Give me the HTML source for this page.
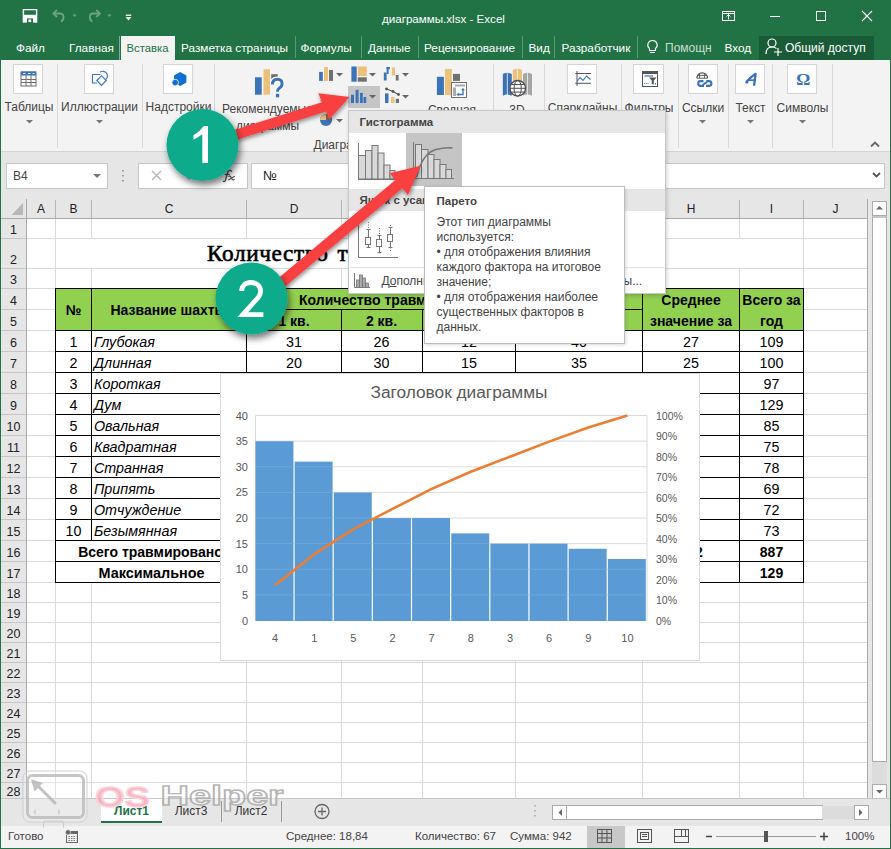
<!DOCTYPE html><html><head><meta charset="utf-8"><style>
html,body{margin:0;padding:0;}
body{width:891px;height:849px;position:relative;overflow:hidden;background:#fff;font-family:"Liberation Sans",sans-serif;}
div{box-sizing:border-box;}
svg{position:absolute;overflow:visible;}
</style></head><body>
<div style="position:absolute;left:0px;top:0px;width:891px;height:60px;background:#217346;"></div>
<svg style="left:0;top:0" width="891" height="60"><path d="M23.4 22.6V9.6H36.6V22.6" fill="none" stroke="#fff" stroke-width="1.4"/><rect x="23" y="14.8" width="14" height="3.6" fill="#fff"/><rect x="23" y="18" width="4" height="4.6" fill="#fff"/><rect x="33" y="18" width="4" height="4.6" fill="#fff"/><rect x="28.4" y="19.5" width="2.8" height="2.6" fill="#fff"/><path d="M53.5 13.5h6.5q3.5 0 3.5 3.8q0 3.2-2.5 4.2" fill="none" stroke="#6aa382" stroke-width="1.9"/><path d="M57 10l-3.6 3.5 3.6 3.5" fill="none" stroke="#6aa382" stroke-width="1.9"/><path d="M72.4 14.6h4.4l-2.2 2.3z" fill="#6aa382"/><path d="M99.8 13.5h-6.5q-3.5 0-3.5 3.8q0 3.2 2.5 4.2" fill="none" stroke="#6aa382" stroke-width="1.9"/><path d="M96.3 10l3.6 3.5-3.6 3.5" fill="none" stroke="#6aa382" stroke-width="1.9"/><path d="M107.1 14.6h4.4l-2.2 2.3z" fill="#6aa382"/><rect x="125.8" y="14.6" width="5.4" height="1.3" fill="#fff"/><path d="M125.6 17h5.8l-2.9 3.5z" fill="#fff"/><rect x="722.5" y="11.5" width="12" height="9" fill="none" stroke="#fff" stroke-width="1"/><path d="M722.5 13.5h12" stroke="#fff"/><path d="M728.5 19.5v-5M726.5 16.5l2-2 2 2" fill="none" stroke="#fff"/><path d="M770 16.5h10" stroke="#fff"/><rect x="816.5" y="11.5" width="9" height="9" fill="none" stroke="#fff"/><path d="M862 11l10 10M872 11l-10 10" stroke="#fff" stroke-width="1.1"/><path d="M295.5 36v22M361.5 36v22M418.5 36v22M522.5 36v22M554.5 36v22M637.5 36v22" stroke="#5d9a74" stroke-width="1"/><path d="M652.5 40.5a4.5 4.5 0 0 1 3 8v2h-6v-2a4.5 4.5 0 0 1 3-8z" fill="none" stroke="#fff" stroke-width="1.1"/><path d="M650 52.5h5" stroke="#fff"/></svg>
<div style="position:absolute;left:382px;top:12px;white-space:nowrap;color:#fff;font-size:11.6px;line-height:14px;">диаграммы.xlsx - Excel</div>
<div style="position:absolute;left:121px;top:36px;width:53.5px;height:24px;background:#f3f3f3;"></div>
<div style="position:absolute;left:119px;top:36px;width:1px;height:24px;background:#7fae90;"></div>
<div style="position:absolute;left:126.5px;top:41px;white-space:nowrap;color:#217346;font-size:11.3px;line-height:14px;">Вставка</div>
<div style="position:absolute;left:16px;top:41px;white-space:nowrap;color:#fff;font-size:11.8px;line-height:14px;">Файл</div>
<div style="position:absolute;left:69px;top:41px;white-space:nowrap;color:#fff;font-size:11.8px;line-height:14px;">Главная</div>
<div style="position:absolute;left:181px;top:41px;white-space:nowrap;color:#fff;font-size:11.8px;line-height:14px;">Разметка страницы</div>
<div style="position:absolute;left:300.5px;top:41px;white-space:nowrap;color:#fff;font-size:11.8px;line-height:14px;">Формулы</div>
<div style="position:absolute;left:368px;top:41px;white-space:nowrap;color:#fff;font-size:11.8px;line-height:14px;">Данные</div>
<div style="position:absolute;left:424px;top:41px;white-space:nowrap;color:#fff;font-size:11.8px;line-height:14px;">Рецензирование</div>
<div style="position:absolute;left:528.5px;top:41px;white-space:nowrap;color:#fff;font-size:11.8px;line-height:14px;">Вид</div>
<div style="position:absolute;left:561.5px;top:41px;white-space:nowrap;color:#fff;font-size:11.8px;line-height:14px;">Разработчик</div>
<div style="position:absolute;left:724.5px;top:41px;white-space:nowrap;color:#fff;font-size:11.8px;line-height:14px;">Вход</div>
<div style="position:absolute;left:665px;top:41px;white-space:nowrap;color:#c9dcd0;font-size:12px;line-height:14px;">Помощн</div>
<div style="position:absolute;left:759px;top:36px;width:115px;height:24px;background:#1a5b37;"></div>
<svg style="left:0;top:0" width="891" height="60"><circle cx="772" cy="43" r="4" fill="none" stroke="#fff" stroke-width="1.2"/><path d="M766 54q0-7 6-7q3 0 4.5 1.5" fill="none" stroke="#fff" stroke-width="1.2"/><path d="M778 48v8M774 52h8" stroke="#fff" stroke-width="1.2"/></svg>
<div style="position:absolute;left:785px;top:41px;white-space:nowrap;color:#fff;font-size:12px;line-height:14px;">Общий доступ</div>
<div style="position:absolute;left:1px;top:60px;width:889px;height:92px;background:#f3f3f3;border-bottom:1px solid #d5d5d5;"></div>
<svg style="left:0;top:0" width="891" height="160"><path d="M57.5 64v84" stroke="#d8d8d8"/><path d="M142.5 64v84" stroke="#d8d8d8"/><path d="M214.5 64v84" stroke="#d8d8d8"/><path d="M493.5 64v84" stroke="#d8d8d8"/><path d="M544.5 64v84" stroke="#d8d8d8"/><path d="M621.5 64v84" stroke="#d8d8d8"/><path d="M678.5 64v84" stroke="#d8d8d8"/><path d="M728.5 64v84" stroke="#d8d8d8"/><path d="M772.5 64v84" stroke="#d8d8d8"/><path d="M832.5 64v84" stroke="#d8d8d8"/></svg>
<div style="position:absolute;left:13px;top:64px;width:30px;height:30px;background:#fdfdfd;border:1px solid #d4d4d4;"></div>
<div style="position:absolute;left:84px;top:64px;width:30px;height:30px;background:#fdfdfd;border:1px solid #d4d4d4;"></div>
<div style="position:absolute;left:163px;top:64px;width:30px;height:30px;background:#fdfdfd;border:1px solid #d4d4d4;"></div>
<div style="position:absolute;left:-271px;top:99.0px;width:600px;height:16px;line-height:16px;text-align:center;white-space:nowrap;color:#444;font-size:12px;">Таблицы</div>
<svg style="left:25.5px;top:120px" width="8" height="4"><path d="M0 0h7l-3.5 3.5z" fill="#777"/></svg>
<div style="position:absolute;left:-200.5px;top:99.0px;width:600px;height:16px;line-height:16px;text-align:center;white-space:nowrap;color:#444;font-size:12px;">Иллюстрации</div>
<svg style="left:95.5px;top:120px" width="8" height="4"><path d="M0 0h7l-3.5 3.5z" fill="#777"/></svg>
<div style="position:absolute;left:-121.5px;top:99.0px;width:600px;height:16px;line-height:16px;text-align:center;white-space:nowrap;color:#444;font-size:12px;">Надстройки</div>
<svg style="left:0;top:0" width="891" height="160"><rect x="21" y="72" width="15" height="14" fill="#fff" stroke="#6d6d6d" stroke-width="1"/><rect x="21" y="71.5" width="15" height="4" fill="#3b73b9"/><path d="M23 73.5h2.5M28 73.5h2.5M32.5 73.5h2" stroke="#fff" stroke-width="0.9"/><path d="M21 79.5h15M21 82.5h15M26 75v11M31 75v11" stroke="#6d6d6d" stroke-width="1"/><path d="M100.5 74.5h-8v8.5h4.5" fill="none" stroke="#3b73b9" stroke-width="1.1"/><path d="M100 72.2a4.6 4.6 0 1 1 5.5 7.5" fill="none" stroke="#3b73b9" stroke-width="1.1"/><path d="M96.8 80.5l4.7-4.8 4.8 4.8-4.8 4.9z" fill="#fdfdfd" stroke="#3b73b9" stroke-width="1.1"/><path d="M180.2 72l6.2 3.4v7.2l-6.2 3.5-6.2-3.5v-7.2z" fill="#1170cf"/><circle cx="175.2" cy="82.6" r="3.3" fill="#1170cf" stroke="#fdfdfd" stroke-width="0.8"/></svg>
<svg style="left:0;top:0" width="891" height="160"><rect x="255" y="77.3" width="6.7" height="17.4" fill="#3b73b9"/><rect x="263.5" y="69.2" width="6.5" height="25.5" fill="#ecc27a"/><rect x="271.2" y="74.2" width="6.6" height="6" fill="#707070"/><path d="M272.5 84.5q0-5.3 4.8-5.3q4.8 0 4.8 4.6q0 2.8-2.8 4.3q-1.8 1-1.8 3.6" fill="none" stroke="#fff" stroke-width="5.5"/><path d="M272.5 84.5q0-5.3 4.8-5.3q4.8 0 4.8 4.6q0 2.8-2.8 4.3q-1.8 1-1.8 3.6" fill="none" stroke="#3b73b9" stroke-width="3"/><rect x="275.9" y="93.8" width="3.3" height="3.5" fill="#3b73b9"/></svg>
<div style="position:absolute;left:-32.5px;top:101.0px;width:600px;height:16px;line-height:16px;text-align:center;white-space:nowrap;color:#444;font-size:12px;">Рекомендуемые</div>
<div style="position:absolute;left:-32.5px;top:117.5px;width:600px;height:16px;line-height:16px;text-align:center;white-space:nowrap;color:#444;font-size:12px;">диаграммы</div>
<div style="position:absolute;left:313.5px;top:138px;white-space:nowrap;color:#444;font-size:12px;line-height:15px;">Диаграммы</div>
<div style="position:absolute;left:348px;top:86px;width:32px;height:22px;background:#c5c5c5;"></div>
<svg style="left:0;top:0" width="891" height="160"><rect x="319.1" y="71.9" width="3.7" height="9" fill="#3b73b9"/><rect x="324" y="67" width="4" height="13.9" fill="#ecc27a"/><rect x="329" y="70" width="4" height="10.9" fill="#707070"/><path d="M321 101l3-6 3 4 3-3 3 3" fill="none" stroke="#707070" stroke-width="1.3"/><circle cx="326" cy="120" r="6" fill="#3b73b9"/><path d="M326 120v-6a6 6 0 0 1 6 6z" fill="#707070"/><path d="M326 120h-6a6 6 0 0 1 6-6z" fill="#ecc27a"/><rect x="351.4" y="66.5" width="5.3" height="15.2" fill="#3b73b9"/><rect x="357.7" y="66.5" width="9.1" height="9.5" fill="#ecc27a"/><rect x="357.7" y="77.3" width="9.1" height="4.4" fill="#707070"/><rect x="351" y="94.7" width="3" height="8.3" fill="#3b73b9"/><rect x="355.6" y="89.8" width="3" height="13.2" fill="#3b73b9"/><rect x="360" y="92.9" width="2.8" height="10.1" fill="#3b73b9"/><rect x="363.5" y="97" width="2.8" height="6" fill="#3b73b9"/><rect x="383.8" y="72.5" width="2.8" height="8" fill="#3b73b9"/><rect x="386.6" y="67" width="3.3" height="2.2" fill="#3b73b9"/><rect x="386.6" y="67" width="2" height="7" fill="#3b73b9"/><rect x="391.8" y="67.4" width="3.2" height="8" fill="#ecc27a"/><rect x="395.8" y="75" width="2.8" height="5.5" fill="#707070"/><rect x="385" y="93.4" width="3.5" height="9.6" fill="#3b73b9"/><rect x="391" y="97" width="3.5" height="6" fill="#ecc27a"/><rect x="395.8" y="98.8" width="3.2" height="4.2" fill="#707070"/><path d="M386.5 89l6.5 2.5 5.5 3" fill="none" stroke="#555" stroke-width="1.1"/><circle cx="386.5" cy="89" r="1.4" fill="#555"/><circle cx="393" cy="91.5" r="1.4" fill="#555"/><circle cx="398.5" cy="94.5" r="1.4" fill="#555"/></svg>
<svg style="left:336px;top:72.5px" width="8" height="4"><path d="M0 0h7l-3.5 3.5z" fill="#666"/></svg>
<svg style="left:336px;top:118.5px" width="8" height="4"><path d="M0 0h7l-3.5 3.5z" fill="#666"/></svg>
<svg style="left:369px;top:72.5px" width="8" height="4"><path d="M0 0h7l-3.5 3.5z" fill="#666"/></svg>
<svg style="left:369px;top:95px" width="8" height="4"><path d="M0 0h7l-3.5 3.5z" fill="#666"/></svg>
<svg style="left:402px;top:72.5px" width="8" height="4"><path d="M0 0h7l-3.5 3.5z" fill="#666"/></svg>
<svg style="left:402px;top:95px" width="8" height="4"><path d="M0 0h7l-3.5 3.5z" fill="#666"/></svg>
<svg style="left:0;top:0" width="891" height="160"><rect x="436.9" y="76.8" width="7" height="18.2" fill="#3b73b9"/><rect x="444.9" y="69" width="7" height="26" fill="#ecc27a"/><rect x="453" y="73.9" width="7" height="7" fill="#707070"/><rect x="451.5" y="82.5" width="15" height="15" fill="#fdfdfd" stroke="#707070"/><rect x="455" y="84.5" width="10" height="2" fill="#aaa"/><rect x="453" y="87.5" width="3" height="8.5" fill="#aaa"/><path d="M458 94.5h5v-5" fill="none" stroke="#3b73b9" stroke-width="1.3"/><path d="M456.5 94.5l2.2-2v4zM463 88l-2 2.2h4z" fill="#3b73b9"/><path d="M502.8 74q4.5-2.5 9 0v21.7q-4.5-2.5-9 0z" fill="#3b73b9"/><path d="M512.8 70q4.6-2.5 9.2 0v12h-9.2z" fill="#ecc27a"/><path d="M523 74q4.5-2.5 9 0v21.7q-4.5-2.5-9 0z" fill="#a6a6a6"/><path d="M507.3 72.5v22.5M527.5 72.5v22.5M517.4 68.5v12" stroke="#f3f3f3" stroke-width="0.8"/><circle cx="517.7" cy="88.3" r="7.8" fill="#fdfdfd" stroke="#505050" stroke-width="1.4"/><path d="M510 88.3h15.4M511.5 84.5h12.4M511.5 92.1h12.4" stroke="#505050" stroke-width="1"/><ellipse cx="517.7" cy="88.3" rx="3.6" ry="7.8" fill="none" stroke="#505050" stroke-width="1"/></svg>
<div style="position:absolute;left:152px;top:102.0px;width:600px;height:16px;line-height:16px;text-align:center;white-space:nowrap;color:#444;font-size:12px;">Сводная</div>
<div style="position:absolute;left:217px;top:102.0px;width:600px;height:16px;line-height:16px;text-align:center;white-space:nowrap;color:#444;font-size:12px;">3D</div>
<div style="position:absolute;left:567px;top:64px;width:30px;height:30px;background:#fdfdfd;border:1px solid #d4d4d4;"></div>
<div style="position:absolute;left:633px;top:64px;width:31px;height:30px;background:#fdfdfd;border:1px solid #d4d4d4;"></div>
<div style="position:absolute;left:688px;top:64px;width:30px;height:30px;background:#fdfdfd;border:1px solid #d4d4d4;"></div>
<div style="position:absolute;left:735px;top:64px;width:30px;height:30px;background:#fdfdfd;border:1px solid #d4d4d4;"></div>
<div style="position:absolute;left:787px;top:64px;width:30px;height:30px;background:#fdfdfd;border:1px solid #d4d4d4;"></div>
<div style="position:absolute;left:282.5px;top:100.0px;width:600px;height:16px;line-height:16px;text-align:center;white-space:nowrap;color:#444;font-size:12px;">Спарклайны</div>
<div style="position:absolute;left:349px;top:100.0px;width:600px;height:16px;line-height:16px;text-align:center;white-space:nowrap;color:#444;font-size:12px;">Фильтры</div>
<div style="position:absolute;left:403px;top:100.0px;width:600px;height:16px;line-height:16px;text-align:center;white-space:nowrap;color:#444;font-size:12px;">Ссылки</div>
<svg style="left:699px;top:120px" width="8" height="4"><path d="M0 0h7l-3.5 3.5z" fill="#777"/></svg>
<div style="position:absolute;left:450.5px;top:100.0px;width:600px;height:16px;line-height:16px;text-align:center;white-space:nowrap;color:#444;font-size:12px;">Текст</div>
<svg style="left:746.5px;top:120px" width="8" height="4"><path d="M0 0h7l-3.5 3.5z" fill="#777"/></svg>
<div style="position:absolute;left:502.5px;top:100.0px;width:600px;height:16px;line-height:16px;text-align:center;white-space:nowrap;color:#444;font-size:12px;">Символы</div>
<svg style="left:798.5px;top:120px" width="8" height="4"><path d="M0 0h7l-3.5 3.5z" fill="#777"/></svg>
<svg style="left:0;top:0" width="891" height="160"><path d="M577 71v15M575.3 73.5h15.6M575.3 83.3h15.6" stroke="#555" stroke-width="1"/><path d="M577 81.5l3-4 3 3 3.5-4.5 4 3.5" fill="none" stroke="#3b73b9" stroke-width="1.1"/><rect x="642.5" y="71.5" width="15" height="15" fill="#fdfdfd" stroke="#555"/><rect x="642.5" y="71.5" width="15" height="2.5" fill="#555"/><path d="M644.5 76h8.5" stroke="#3b73b9" stroke-width="1.2"/><path d="M649 77.5h7.5l-2.7 3v3.7h-2v-3.7z" fill="#555"/><path d="M644 83.5h4.5" stroke="#3b73b9" stroke-width="0.9" stroke-dasharray="1 0.8"/><path d="M655.5 83v1.5" stroke="#3b73b9"/><path d="M696.8 78.2A5.4 5.4 0 0 1 707.6 78.2" fill="none" stroke="#555" stroke-width="1.2"/><path d="M697 78.2H707.4M697.6 75.4H706.8M699.6 73V78.2M704.6 73V78.2" stroke="#555" stroke-width="0.9"/><path d="M703.5 81.1H700.6A2.4 2.4 0 0 0 700.6 85.9H704M706.3 81.1H709A2.4 2.4 0 0 1 709 85.9H706" fill="none" stroke="#3b73b9" stroke-width="2.1"/><path d="M702.6 85L707 82" stroke="#3b73b9" stroke-width="2.1"/><path d="M755.6 73.8L754.2 84.8" stroke="#3b73b9" stroke-width="2.3" stroke-linecap="round"/><path d="M755 74.2Q750.5 77.5 746.6 81.6Q745.6 82.8 747.4 82.4" fill="none" stroke="#3b73b9" stroke-width="2.2" stroke-linecap="round"/><path d="M748.6 80.2H754.6" stroke="#3b73b9" stroke-width="1.8"/><text x="803.3" y="85" font-family="Liberation Serif" font-weight="bold" font-size="17.5" fill="#3b73b9" text-anchor="middle">Ω</text><path d="M871 146.5l4-4 4 4" fill="none" stroke="#666" stroke-width="1.8"/></svg>
<div style="position:absolute;left:1px;top:152px;width:889px;height:47px;background:#e6e6e6;"></div>
<div style="position:absolute;left:6px;top:163px;width:102px;height:26px;background:#fff;border:1px solid #c6c6c6;"></div>
<div style="position:absolute;left:13px;top:169px;white-space:nowrap;color:#444;font-size:12px;line-height:14px;">B4</div>
<svg style="left:0;top:0" width="891" height="200"><path d="M93 174h8l-4 4z" fill="#777"/><path d="M123 170v1.5M123 175v1.5M123 180v1.5" stroke="#888" stroke-width="1.5"/></svg>
<div style="position:absolute;left:138px;top:163px;width:110px;height:26px;background:#fff;border:1px solid #c6c6c6;"></div>
<svg style="left:0;top:0" width="891" height="200"><path d="M152 171l9 9M161 171l-9 9" stroke="#b5b5b5" stroke-width="1.4"/><path d="M186 176l3 3 6-7" fill="none" stroke="#b5b5b5" stroke-width="1.4"/><path d="M231.8 171.6Q230.6 169.6 228.8 170.6Q227.6 171.4 227.1 174.5L225.6 179.6Q224.8 182.4 222.9 181.2" fill="none" stroke="#555" stroke-width="1.5"/><path d="M224.6 174.4H229.8" stroke="#555" stroke-width="1.2"/><path d="M228.3 176.5Q230 175.3 231.2 177.6L232.1 179.2Q233 180.4 234.6 179.3M234.8 176.3L228.3 180" fill="none" stroke="#555" stroke-width="1.3"/></svg>
<div style="position:absolute;left:251px;top:163px;width:634px;height:26px;background:#fff;border:1px solid #c6c6c6;"></div>
<div style="position:absolute;left:263px;top:169px;white-space:nowrap;color:#222;font-size:13px;line-height:14px;">№</div>
<svg style="left:0;top:0" width="891" height="200"><path d="M873 173l3.5 3.5 3.5-3.5" fill="none" stroke="#555" stroke-width="1.8"/></svg>
<div style="position:absolute;left:1px;top:199px;width:867px;height:19px;background:#e6e6e6;"></div>
<div style="position:absolute;left:1px;top:218px;width:25px;height:580px;background:#e6e6e6;"></div>
<div style="position:absolute;left:27px;top:219px;width:840px;height:579px;background:#fff;"></div>
<svg style="left:0;top:0" width="891" height="849"><path d="M55.5 219V798" stroke="#dadada"/><path d="M91.5 219V238M91.5 268V540M91.5 582V798" stroke="#dadada"/><path d="M246.5 219V238M246.5 268V798" stroke="#dadada"/><path d="M341.5 219V238M341.5 268V798" stroke="#dadada"/><path d="M422.5 219V238M422.5 268V798" stroke="#dadada"/><path d="M515.5 219V238M515.5 268V798" stroke="#dadada"/><path d="M642.5 219V238M642.5 268V798" stroke="#dadada"/><path d="M739.5 219V238M739.5 268V798" stroke="#dadada"/><path d="M803.5 219V798" stroke="#dadada"/><path d="M867.5 219V798" stroke="#dadada"/><path d="M27 238.5H867" stroke="#dadada"/><path d="M27 268.5H867" stroke="#dadada"/><path d="M27 288.5H867" stroke="#dadada"/><path d="M27 309.5H867" stroke="#dadada"/><path d="M27 330.5H867" stroke="#dadada"/><path d="M27 351.5H867" stroke="#dadada"/><path d="M27 372.5H867" stroke="#dadada"/><path d="M27 393.5H867" stroke="#dadada"/><path d="M27 414.5H867" stroke="#dadada"/><path d="M27 435.5H867" stroke="#dadada"/><path d="M27 456.5H867" stroke="#dadada"/><path d="M27 477.5H867" stroke="#dadada"/><path d="M27 498.5H867" stroke="#dadada"/><path d="M27 519.5H867" stroke="#dadada"/><path d="M27 540.5H867" stroke="#dadada"/><path d="M27 561.5H867" stroke="#dadada"/><path d="M27 582.5H867" stroke="#dadada"/><path d="M27 602.5H867" stroke="#dadada"/><path d="M27 622.5H867" stroke="#dadada"/><path d="M27 642.5H867" stroke="#dadada"/><path d="M27 662.5H867" stroke="#dadada"/><path d="M27 682.5H867" stroke="#dadada"/><path d="M27 702.5H867" stroke="#dadada"/><path d="M27 722.5H867" stroke="#dadada"/><path d="M27 742.5H867" stroke="#dadada"/><path d="M27 762.5H867" stroke="#dadada"/><path d="M27 782.5H867" stroke="#dadada"/><path d="M55.5 200V218" stroke="#b4b4b4"/><path d="M91.5 200V218" stroke="#b4b4b4"/><path d="M246.5 200V218" stroke="#b4b4b4"/><path d="M341.5 200V218" stroke="#b4b4b4"/><path d="M422.5 200V218" stroke="#b4b4b4"/><path d="M515.5 200V218" stroke="#b4b4b4"/><path d="M642.5 200V218" stroke="#b4b4b4"/><path d="M739.5 200V218" stroke="#b4b4b4"/><path d="M803.5 200V218" stroke="#b4b4b4"/><path d="M867.5 200V218" stroke="#b4b4b4"/><path d="M1 218.5H868M26.5 199V798" stroke="#ababab"/><path d="M867.5 199V798" stroke="#ababab"/><path d="M1 238.5H26" stroke="#c6c6c6"/><path d="M1 268.5H26" stroke="#c6c6c6"/><path d="M1 288.5H26" stroke="#c6c6c6"/><path d="M1 309.5H26" stroke="#c6c6c6"/><path d="M1 330.5H26" stroke="#c6c6c6"/><path d="M1 351.5H26" stroke="#c6c6c6"/><path d="M1 372.5H26" stroke="#c6c6c6"/><path d="M1 393.5H26" stroke="#c6c6c6"/><path d="M1 414.5H26" stroke="#c6c6c6"/><path d="M1 435.5H26" stroke="#c6c6c6"/><path d="M1 456.5H26" stroke="#c6c6c6"/><path d="M1 477.5H26" stroke="#c6c6c6"/><path d="M1 498.5H26" stroke="#c6c6c6"/><path d="M1 519.5H26" stroke="#c6c6c6"/><path d="M1 540.5H26" stroke="#c6c6c6"/><path d="M1 561.5H26" stroke="#c6c6c6"/><path d="M1 582.5H26" stroke="#c6c6c6"/><path d="M1 602.5H26" stroke="#c6c6c6"/><path d="M1 622.5H26" stroke="#c6c6c6"/><path d="M1 642.5H26" stroke="#c6c6c6"/><path d="M1 662.5H26" stroke="#c6c6c6"/><path d="M1 682.5H26" stroke="#c6c6c6"/><path d="M1 702.5H26" stroke="#c6c6c6"/><path d="M1 722.5H26" stroke="#c6c6c6"/><path d="M1 742.5H26" stroke="#c6c6c6"/><path d="M1 762.5H26" stroke="#c6c6c6"/><path d="M1 782.5H26" stroke="#c6c6c6"/><path d="M23 203v12h-11.5z" fill="#b8b8b8"/></svg>
<div style="position:absolute;left:-259.0px;top:201.0px;width:600px;height:16px;line-height:16px;text-align:center;white-space:nowrap;color:#222;font-size:12px;">A</div>
<div style="position:absolute;left:-226.5px;top:201.0px;width:600px;height:16px;line-height:16px;text-align:center;white-space:nowrap;color:#222;font-size:12px;">B</div>
<div style="position:absolute;left:-131.0px;top:201.0px;width:600px;height:16px;line-height:16px;text-align:center;white-space:nowrap;color:#222;font-size:12px;">C</div>
<div style="position:absolute;left:-6.0px;top:201.0px;width:600px;height:16px;line-height:16px;text-align:center;white-space:nowrap;color:#222;font-size:12px;">D</div>
<div style="position:absolute;left:82.0px;top:201.0px;width:600px;height:16px;line-height:16px;text-align:center;white-space:nowrap;color:#222;font-size:12px;">E</div>
<div style="position:absolute;left:169.0px;top:201.0px;width:600px;height:16px;line-height:16px;text-align:center;white-space:nowrap;color:#222;font-size:12px;">F</div>
<div style="position:absolute;left:279.0px;top:201.0px;width:600px;height:16px;line-height:16px;text-align:center;white-space:nowrap;color:#222;font-size:12px;">G</div>
<div style="position:absolute;left:391.0px;top:201.0px;width:600px;height:16px;line-height:16px;text-align:center;white-space:nowrap;color:#222;font-size:12px;">H</div>
<div style="position:absolute;left:471.5px;top:201.0px;width:600px;height:16px;line-height:16px;text-align:center;white-space:nowrap;color:#222;font-size:12px;">I</div>
<div style="position:absolute;left:535.5px;top:201.0px;width:600px;height:16px;line-height:16px;text-align:center;white-space:nowrap;color:#222;font-size:12px;">J</div>
<div style="position:absolute;left:-286.5px;top:221.5px;width:600px;height:16px;line-height:16px;text-align:center;white-space:nowrap;color:#222;font-size:12.5px;">1</div>
<div style="position:absolute;left:-286.5px;top:252.0px;width:600px;height:16px;line-height:16px;text-align:center;white-space:nowrap;color:#222;font-size:12.5px;">2</div>
<div style="position:absolute;left:-286.5px;top:271.5px;width:600px;height:16px;line-height:16px;text-align:center;white-space:nowrap;color:#222;font-size:12.5px;">3</div>
<div style="position:absolute;left:-286.5px;top:293.0px;width:600px;height:16px;line-height:16px;text-align:center;white-space:nowrap;color:#222;font-size:12.5px;">4</div>
<div style="position:absolute;left:-286.5px;top:314.0px;width:600px;height:16px;line-height:16px;text-align:center;white-space:nowrap;color:#222;font-size:12.5px;">5</div>
<div style="position:absolute;left:-286.5px;top:335.0px;width:600px;height:16px;line-height:16px;text-align:center;white-space:nowrap;color:#222;font-size:12.5px;">6</div>
<div style="position:absolute;left:-286.5px;top:356.0px;width:600px;height:16px;line-height:16px;text-align:center;white-space:nowrap;color:#222;font-size:12.5px;">7</div>
<div style="position:absolute;left:-286.5px;top:377.0px;width:600px;height:16px;line-height:16px;text-align:center;white-space:nowrap;color:#222;font-size:12.5px;">8</div>
<div style="position:absolute;left:-286.5px;top:398.0px;width:600px;height:16px;line-height:16px;text-align:center;white-space:nowrap;color:#222;font-size:12.5px;">9</div>
<div style="position:absolute;left:-286.5px;top:419.0px;width:600px;height:16px;line-height:16px;text-align:center;white-space:nowrap;color:#222;font-size:12.5px;">10</div>
<div style="position:absolute;left:-286.5px;top:440.0px;width:600px;height:16px;line-height:16px;text-align:center;white-space:nowrap;color:#222;font-size:12.5px;">11</div>
<div style="position:absolute;left:-286.5px;top:461.0px;width:600px;height:16px;line-height:16px;text-align:center;white-space:nowrap;color:#222;font-size:12.5px;">12</div>
<div style="position:absolute;left:-286.5px;top:482.0px;width:600px;height:16px;line-height:16px;text-align:center;white-space:nowrap;color:#222;font-size:12.5px;">13</div>
<div style="position:absolute;left:-286.5px;top:503.0px;width:600px;height:16px;line-height:16px;text-align:center;white-space:nowrap;color:#222;font-size:12.5px;">14</div>
<div style="position:absolute;left:-286.5px;top:524.0px;width:600px;height:16px;line-height:16px;text-align:center;white-space:nowrap;color:#222;font-size:12.5px;">15</div>
<div style="position:absolute;left:-286.5px;top:545.0px;width:600px;height:16px;line-height:16px;text-align:center;white-space:nowrap;color:#222;font-size:12.5px;">16</div>
<div style="position:absolute;left:-286.5px;top:566.0px;width:600px;height:16px;line-height:16px;text-align:center;white-space:nowrap;color:#222;font-size:12.5px;">17</div>
<div style="position:absolute;left:-286.5px;top:585.5px;width:600px;height:16px;line-height:16px;text-align:center;white-space:nowrap;color:#222;font-size:12.5px;">18</div>
<div style="position:absolute;left:-286.5px;top:605.5px;width:600px;height:16px;line-height:16px;text-align:center;white-space:nowrap;color:#222;font-size:12.5px;">19</div>
<div style="position:absolute;left:-286.5px;top:625.5px;width:600px;height:16px;line-height:16px;text-align:center;white-space:nowrap;color:#222;font-size:12.5px;">20</div>
<div style="position:absolute;left:-286.5px;top:645.5px;width:600px;height:16px;line-height:16px;text-align:center;white-space:nowrap;color:#222;font-size:12.5px;">21</div>
<div style="position:absolute;left:-286.5px;top:665.5px;width:600px;height:16px;line-height:16px;text-align:center;white-space:nowrap;color:#222;font-size:12.5px;">22</div>
<div style="position:absolute;left:-286.5px;top:685.5px;width:600px;height:16px;line-height:16px;text-align:center;white-space:nowrap;color:#222;font-size:12.5px;">23</div>
<div style="position:absolute;left:-286.5px;top:705.5px;width:600px;height:16px;line-height:16px;text-align:center;white-space:nowrap;color:#222;font-size:12.5px;">24</div>
<div style="position:absolute;left:-286.5px;top:725.5px;width:600px;height:16px;line-height:16px;text-align:center;white-space:nowrap;color:#222;font-size:12.5px;">25</div>
<div style="position:absolute;left:-286.5px;top:745.5px;width:600px;height:16px;line-height:16px;text-align:center;white-space:nowrap;color:#222;font-size:12.5px;">26</div>
<div style="position:absolute;left:-286.5px;top:765.5px;width:600px;height:16px;line-height:16px;text-align:center;white-space:nowrap;color:#222;font-size:12.5px;">27</div>
<div style="position:absolute;left:-286.5px;top:783.5px;width:600px;height:16px;line-height:16px;text-align:center;white-space:nowrap;color:#222;font-size:12.5px;">28</div>
<div style="position:absolute;left:56px;top:289px;width:747px;height:41px;background:#92d050;"></div>
<div style="position:absolute;left:207px;top:240px;white-space:nowrap;color:#000;font-size:23.3px;font-weight:normal;-webkit-text-stroke:0.6px #000;font-family:'Liberation Serif',serif;line-height:26px;letter-spacing:0.6px;word-spacing:2.7px;">Количество травм на шахтах</div>
<div style="position:absolute;left:-226.5px;top:302.0px;width:600px;height:16px;line-height:16px;text-align:center;white-space:nowrap;color:#000;font-size:14px;font-weight:bold;">№</div>
<div style="position:absolute;left:-131.5px;top:302.0px;width:600px;height:16px;line-height:16px;text-align:center;white-space:nowrap;color:#000;font-size:14px;font-weight:bold;">Название шахты</div>
<div style="position:absolute;left:299px;top:292px;white-space:nowrap;color:#000;font-size:14px;font-weight:bold;line-height:16px;">Количество травмированных по кварталам</div>
<div style="position:absolute;left:-6px;top:313.0px;width:600px;height:16px;line-height:16px;text-align:center;white-space:nowrap;color:#000;font-size:14px;font-weight:bold;">1 кв.</div>
<div style="position:absolute;left:81.5px;top:313.0px;width:600px;height:16px;line-height:16px;text-align:center;white-space:nowrap;color:#000;font-size:14px;font-weight:bold;">2 кв.</div>
<div style="position:absolute;left:169px;top:313.0px;width:600px;height:16px;line-height:16px;text-align:center;white-space:nowrap;color:#000;font-size:14px;font-weight:bold;">3 кв.</div>
<div style="position:absolute;left:279px;top:313.0px;width:600px;height:16px;line-height:16px;text-align:center;white-space:nowrap;color:#000;font-size:14px;font-weight:bold;">4 кв.</div>
<div style="position:absolute;left:391px;top:292.0px;width:600px;height:16px;line-height:16px;text-align:center;white-space:nowrap;color:#000;font-size:14px;font-weight:bold;">Среднее</div>
<div style="position:absolute;left:391px;top:313.0px;width:600px;height:16px;line-height:16px;text-align:center;white-space:nowrap;color:#000;font-size:14px;font-weight:bold;">значение за</div>
<div style="position:absolute;left:471.5px;top:292.0px;width:600px;height:16px;line-height:16px;text-align:center;white-space:nowrap;color:#000;font-size:14px;font-weight:bold;">Всего за</div>
<div style="position:absolute;left:471.5px;top:313.0px;width:600px;height:16px;line-height:16px;text-align:center;white-space:nowrap;color:#000;font-size:14px;font-weight:bold;">год</div>
<div style="position:absolute;left:-226.5px;top:333.5px;width:600px;height:16px;line-height:16px;text-align:center;white-space:nowrap;color:#000;font-size:14.3px;">1</div>
<div style="position:absolute;left:94px;top:333.5px;white-space:nowrap;color:#000;font-size:14.3px;font-style:italic;line-height:16px;">Глубокая</div>
<div style="position:absolute;left:-6px;top:333.5px;width:600px;height:16px;line-height:16px;text-align:center;white-space:nowrap;color:#000;font-size:14.3px;">31</div>
<div style="position:absolute;left:81.5px;top:333.5px;width:600px;height:16px;line-height:16px;text-align:center;white-space:nowrap;color:#000;font-size:14.3px;">26</div>
<div style="position:absolute;left:169px;top:333.5px;width:600px;height:16px;line-height:16px;text-align:center;white-space:nowrap;color:#000;font-size:14.3px;">12</div>
<div style="position:absolute;left:279px;top:333.5px;width:600px;height:16px;line-height:16px;text-align:center;white-space:nowrap;color:#000;font-size:14.3px;">40</div>
<div style="position:absolute;left:391px;top:333.5px;width:600px;height:16px;line-height:16px;text-align:center;white-space:nowrap;color:#000;font-size:14.3px;">27</div>
<div style="position:absolute;left:471.5px;top:333.5px;width:600px;height:16px;line-height:16px;text-align:center;white-space:nowrap;color:#000;font-size:14.3px;">109</div>
<div style="position:absolute;left:-226.5px;top:354.5px;width:600px;height:16px;line-height:16px;text-align:center;white-space:nowrap;color:#000;font-size:14.3px;">2</div>
<div style="position:absolute;left:94px;top:354.5px;white-space:nowrap;color:#000;font-size:14.3px;font-style:italic;line-height:16px;">Длинная</div>
<div style="position:absolute;left:-6px;top:354.5px;width:600px;height:16px;line-height:16px;text-align:center;white-space:nowrap;color:#000;font-size:14.3px;">20</div>
<div style="position:absolute;left:81.5px;top:354.5px;width:600px;height:16px;line-height:16px;text-align:center;white-space:nowrap;color:#000;font-size:14.3px;">30</div>
<div style="position:absolute;left:169px;top:354.5px;width:600px;height:16px;line-height:16px;text-align:center;white-space:nowrap;color:#000;font-size:14.3px;">15</div>
<div style="position:absolute;left:279px;top:354.5px;width:600px;height:16px;line-height:16px;text-align:center;white-space:nowrap;color:#000;font-size:14.3px;">35</div>
<div style="position:absolute;left:391px;top:354.5px;width:600px;height:16px;line-height:16px;text-align:center;white-space:nowrap;color:#000;font-size:14.3px;">25</div>
<div style="position:absolute;left:471.5px;top:354.5px;width:600px;height:16px;line-height:16px;text-align:center;white-space:nowrap;color:#000;font-size:14.3px;">100</div>
<div style="position:absolute;left:-226.5px;top:375.5px;width:600px;height:16px;line-height:16px;text-align:center;white-space:nowrap;color:#000;font-size:14.3px;">3</div>
<div style="position:absolute;left:94px;top:375.5px;white-space:nowrap;color:#000;font-size:14.3px;font-style:italic;line-height:16px;">Короткая</div>
<div style="position:absolute;left:-6px;top:375.5px;width:600px;height:16px;line-height:16px;text-align:center;white-space:nowrap;color:#000;font-size:14.3px;">35</div>
<div style="position:absolute;left:81.5px;top:375.5px;width:600px;height:16px;line-height:16px;text-align:center;white-space:nowrap;color:#000;font-size:14.3px;">20</div>
<div style="position:absolute;left:169px;top:375.5px;width:600px;height:16px;line-height:16px;text-align:center;white-space:nowrap;color:#000;font-size:14.3px;">20</div>
<div style="position:absolute;left:279px;top:375.5px;width:600px;height:16px;line-height:16px;text-align:center;white-space:nowrap;color:#000;font-size:14.3px;">22</div>
<div style="position:absolute;left:391px;top:375.5px;width:600px;height:16px;line-height:16px;text-align:center;white-space:nowrap;color:#000;font-size:14.3px;">24</div>
<div style="position:absolute;left:471.5px;top:375.5px;width:600px;height:16px;line-height:16px;text-align:center;white-space:nowrap;color:#000;font-size:14.3px;">97</div>
<div style="position:absolute;left:-226.5px;top:396.5px;width:600px;height:16px;line-height:16px;text-align:center;white-space:nowrap;color:#000;font-size:14.3px;">4</div>
<div style="position:absolute;left:94px;top:396.5px;white-space:nowrap;color:#000;font-size:14.3px;font-style:italic;line-height:16px;">Дум</div>
<div style="position:absolute;left:-6px;top:396.5px;width:600px;height:16px;line-height:16px;text-align:center;white-space:nowrap;color:#000;font-size:14.3px;">35</div>
<div style="position:absolute;left:81.5px;top:396.5px;width:600px;height:16px;line-height:16px;text-align:center;white-space:nowrap;color:#000;font-size:14.3px;">31</div>
<div style="position:absolute;left:169px;top:396.5px;width:600px;height:16px;line-height:16px;text-align:center;white-space:nowrap;color:#000;font-size:14.3px;">28</div>
<div style="position:absolute;left:279px;top:396.5px;width:600px;height:16px;line-height:16px;text-align:center;white-space:nowrap;color:#000;font-size:14.3px;">35</div>
<div style="position:absolute;left:391px;top:396.5px;width:600px;height:16px;line-height:16px;text-align:center;white-space:nowrap;color:#000;font-size:14.3px;">32</div>
<div style="position:absolute;left:471.5px;top:396.5px;width:600px;height:16px;line-height:16px;text-align:center;white-space:nowrap;color:#000;font-size:14.3px;">129</div>
<div style="position:absolute;left:-226.5px;top:417.5px;width:600px;height:16px;line-height:16px;text-align:center;white-space:nowrap;color:#000;font-size:14.3px;">5</div>
<div style="position:absolute;left:94px;top:417.5px;white-space:nowrap;color:#000;font-size:14.3px;font-style:italic;line-height:16px;">Овальная</div>
<div style="position:absolute;left:-6px;top:417.5px;width:600px;height:16px;line-height:16px;text-align:center;white-space:nowrap;color:#000;font-size:14.3px;">25</div>
<div style="position:absolute;left:81.5px;top:417.5px;width:600px;height:16px;line-height:16px;text-align:center;white-space:nowrap;color:#000;font-size:14.3px;">20</div>
<div style="position:absolute;left:169px;top:417.5px;width:600px;height:16px;line-height:16px;text-align:center;white-space:nowrap;color:#000;font-size:14.3px;">20</div>
<div style="position:absolute;left:279px;top:417.5px;width:600px;height:16px;line-height:16px;text-align:center;white-space:nowrap;color:#000;font-size:14.3px;">20</div>
<div style="position:absolute;left:391px;top:417.5px;width:600px;height:16px;line-height:16px;text-align:center;white-space:nowrap;color:#000;font-size:14.3px;">21</div>
<div style="position:absolute;left:471.5px;top:417.5px;width:600px;height:16px;line-height:16px;text-align:center;white-space:nowrap;color:#000;font-size:14.3px;">85</div>
<div style="position:absolute;left:-226.5px;top:438.5px;width:600px;height:16px;line-height:16px;text-align:center;white-space:nowrap;color:#000;font-size:14.3px;">6</div>
<div style="position:absolute;left:94px;top:438.5px;white-space:nowrap;color:#000;font-size:14.3px;font-style:italic;line-height:16px;">Квадратная</div>
<div style="position:absolute;left:-6px;top:438.5px;width:600px;height:16px;line-height:16px;text-align:center;white-space:nowrap;color:#000;font-size:14.3px;">15</div>
<div style="position:absolute;left:81.5px;top:438.5px;width:600px;height:16px;line-height:16px;text-align:center;white-space:nowrap;color:#000;font-size:14.3px;">20</div>
<div style="position:absolute;left:169px;top:438.5px;width:600px;height:16px;line-height:16px;text-align:center;white-space:nowrap;color:#000;font-size:14.3px;">20</div>
<div style="position:absolute;left:279px;top:438.5px;width:600px;height:16px;line-height:16px;text-align:center;white-space:nowrap;color:#000;font-size:14.3px;">20</div>
<div style="position:absolute;left:391px;top:438.5px;width:600px;height:16px;line-height:16px;text-align:center;white-space:nowrap;color:#000;font-size:14.3px;">19</div>
<div style="position:absolute;left:471.5px;top:438.5px;width:600px;height:16px;line-height:16px;text-align:center;white-space:nowrap;color:#000;font-size:14.3px;">75</div>
<div style="position:absolute;left:-226.5px;top:459.5px;width:600px;height:16px;line-height:16px;text-align:center;white-space:nowrap;color:#000;font-size:14.3px;">7</div>
<div style="position:absolute;left:94px;top:459.5px;white-space:nowrap;color:#000;font-size:14.3px;font-style:italic;line-height:16px;">Странная</div>
<div style="position:absolute;left:-6px;top:459.5px;width:600px;height:16px;line-height:16px;text-align:center;white-space:nowrap;color:#000;font-size:14.3px;">20</div>
<div style="position:absolute;left:81.5px;top:459.5px;width:600px;height:16px;line-height:16px;text-align:center;white-space:nowrap;color:#000;font-size:14.3px;">18</div>
<div style="position:absolute;left:169px;top:459.5px;width:600px;height:16px;line-height:16px;text-align:center;white-space:nowrap;color:#000;font-size:14.3px;">20</div>
<div style="position:absolute;left:279px;top:459.5px;width:600px;height:16px;line-height:16px;text-align:center;white-space:nowrap;color:#000;font-size:14.3px;">20</div>
<div style="position:absolute;left:391px;top:459.5px;width:600px;height:16px;line-height:16px;text-align:center;white-space:nowrap;color:#000;font-size:14.3px;">20</div>
<div style="position:absolute;left:471.5px;top:459.5px;width:600px;height:16px;line-height:16px;text-align:center;white-space:nowrap;color:#000;font-size:14.3px;">78</div>
<div style="position:absolute;left:-226.5px;top:480.5px;width:600px;height:16px;line-height:16px;text-align:center;white-space:nowrap;color:#000;font-size:14.3px;">8</div>
<div style="position:absolute;left:94px;top:480.5px;white-space:nowrap;color:#000;font-size:14.3px;font-style:italic;line-height:16px;">Припять</div>
<div style="position:absolute;left:-6px;top:480.5px;width:600px;height:16px;line-height:16px;text-align:center;white-space:nowrap;color:#000;font-size:14.3px;">17</div>
<div style="position:absolute;left:81.5px;top:480.5px;width:600px;height:16px;line-height:16px;text-align:center;white-space:nowrap;color:#000;font-size:14.3px;">17</div>
<div style="position:absolute;left:169px;top:480.5px;width:600px;height:16px;line-height:16px;text-align:center;white-space:nowrap;color:#000;font-size:14.3px;">17</div>
<div style="position:absolute;left:279px;top:480.5px;width:600px;height:16px;line-height:16px;text-align:center;white-space:nowrap;color:#000;font-size:14.3px;">18</div>
<div style="position:absolute;left:391px;top:480.5px;width:600px;height:16px;line-height:16px;text-align:center;white-space:nowrap;color:#000;font-size:14.3px;">17</div>
<div style="position:absolute;left:471.5px;top:480.5px;width:600px;height:16px;line-height:16px;text-align:center;white-space:nowrap;color:#000;font-size:14.3px;">69</div>
<div style="position:absolute;left:-226.5px;top:501.5px;width:600px;height:16px;line-height:16px;text-align:center;white-space:nowrap;color:#000;font-size:14.3px;">9</div>
<div style="position:absolute;left:94px;top:501.5px;white-space:nowrap;color:#000;font-size:14.3px;font-style:italic;line-height:16px;">Отчуждение</div>
<div style="position:absolute;left:-6px;top:501.5px;width:600px;height:16px;line-height:16px;text-align:center;white-space:nowrap;color:#000;font-size:14.3px;">14</div>
<div style="position:absolute;left:81.5px;top:501.5px;width:600px;height:16px;line-height:16px;text-align:center;white-space:nowrap;color:#000;font-size:14.3px;">18</div>
<div style="position:absolute;left:169px;top:501.5px;width:600px;height:16px;line-height:16px;text-align:center;white-space:nowrap;color:#000;font-size:14.3px;">20</div>
<div style="position:absolute;left:279px;top:501.5px;width:600px;height:16px;line-height:16px;text-align:center;white-space:nowrap;color:#000;font-size:14.3px;">20</div>
<div style="position:absolute;left:391px;top:501.5px;width:600px;height:16px;line-height:16px;text-align:center;white-space:nowrap;color:#000;font-size:14.3px;">18</div>
<div style="position:absolute;left:471.5px;top:501.5px;width:600px;height:16px;line-height:16px;text-align:center;white-space:nowrap;color:#000;font-size:14.3px;">72</div>
<div style="position:absolute;left:-226.5px;top:522.5px;width:600px;height:16px;line-height:16px;text-align:center;white-space:nowrap;color:#000;font-size:14.3px;">10</div>
<div style="position:absolute;left:94px;top:522.5px;white-space:nowrap;color:#000;font-size:14.3px;font-style:italic;line-height:16px;">Безымянная</div>
<div style="position:absolute;left:-6px;top:522.5px;width:600px;height:16px;line-height:16px;text-align:center;white-space:nowrap;color:#000;font-size:14.3px;">12</div>
<div style="position:absolute;left:81.5px;top:522.5px;width:600px;height:16px;line-height:16px;text-align:center;white-space:nowrap;color:#000;font-size:14.3px;">18</div>
<div style="position:absolute;left:169px;top:522.5px;width:600px;height:16px;line-height:16px;text-align:center;white-space:nowrap;color:#000;font-size:14.3px;">23</div>
<div style="position:absolute;left:279px;top:522.5px;width:600px;height:16px;line-height:16px;text-align:center;white-space:nowrap;color:#000;font-size:14.3px;">20</div>
<div style="position:absolute;left:391px;top:522.5px;width:600px;height:16px;line-height:16px;text-align:center;white-space:nowrap;color:#000;font-size:14.3px;">18</div>
<div style="position:absolute;left:471.5px;top:522.5px;width:600px;height:16px;line-height:16px;text-align:center;white-space:nowrap;color:#000;font-size:14.3px;">73</div>
<div style="position:absolute;left:-149.5px;top:543.5px;width:600px;height:16px;line-height:16px;text-align:center;white-space:nowrap;color:#000;font-size:14px;font-weight:bold;">Всего травмировано</div>
<div style="position:absolute;left:-148.5px;top:564.5px;width:600px;height:16px;line-height:16px;text-align:center;white-space:nowrap;color:#000;font-size:14px;font-weight:bold;font-size:14.4px;">Максимальное</div>
<div style="position:absolute;left:471.5px;top:543.5px;width:600px;height:16px;line-height:16px;text-align:center;white-space:nowrap;color:#000;font-size:14px;font-weight:bold;">887</div>
<div style="position:absolute;left:471.5px;top:564.5px;width:600px;height:16px;line-height:16px;text-align:center;white-space:nowrap;color:#000;font-size:14px;font-weight:bold;">129</div>
<div style="position:absolute;left:391px;top:543.5px;width:600px;height:16px;line-height:16px;text-align:center;white-space:nowrap;color:#000;font-size:14px;font-weight:bold;">202</div>
<svg style="left:0;top:0" width="891" height="849"><path d="M55 288.5H804" stroke="#000" stroke-width="1"/><path d="M55 330.5H804" stroke="#000" stroke-width="1"/><path d="M55 351.5H804" stroke="#000" stroke-width="1"/><path d="M55 372.5H804" stroke="#000" stroke-width="1"/><path d="M55 393.5H804" stroke="#000" stroke-width="1"/><path d="M55 414.5H804" stroke="#000" stroke-width="1"/><path d="M55 435.5H804" stroke="#000" stroke-width="1"/><path d="M55 456.5H804" stroke="#000" stroke-width="1"/><path d="M55 477.5H804" stroke="#000" stroke-width="1"/><path d="M55 498.5H804" stroke="#000" stroke-width="1"/><path d="M55 519.5H804" stroke="#000" stroke-width="1"/><path d="M55 540.5H804" stroke="#000" stroke-width="1"/><path d="M55 561.5H804" stroke="#000" stroke-width="1"/><path d="M55 582.5H804" stroke="#000" stroke-width="1"/><path d="M246 309.5H642" stroke="#000" stroke-width="1"/><path d="M55.5 288V583" stroke="#000" stroke-width="1"/><path d="M803.5 288V583" stroke="#000" stroke-width="1"/><path d="M91.5 288V541" stroke="#000" stroke-width="1"/><path d="M246.5 288V583" stroke="#000" stroke-width="1"/><path d="M642.5 288V583" stroke="#000" stroke-width="1"/><path d="M739.5 288V583" stroke="#000" stroke-width="1"/><path d="M341.5 309V540" stroke="#000" stroke-width="1"/><path d="M422.5 309V540" stroke="#000" stroke-width="1"/><path d="M515.5 309V540" stroke="#000" stroke-width="1"/></svg>
<div style="position:absolute;left:220px;top:373px;width:480px;height:288px;background:#fff;border:1px solid #d9d9d9;"></div>
<svg style="left:0;top:0" width="891" height="849"><path d="M255.5 415.50H647" stroke="#d9d9d9" stroke-width="1"/><path d="M255.5 441.12H647" stroke="#d9d9d9" stroke-width="1"/><path d="M255.5 466.75H647" stroke="#d9d9d9" stroke-width="1"/><path d="M255.5 492.38H647" stroke="#d9d9d9" stroke-width="1"/><path d="M255.5 518.00H647" stroke="#d9d9d9" stroke-width="1"/><path d="M255.5 543.62H647" stroke="#d9d9d9" stroke-width="1"/><path d="M255.5 569.25H647" stroke="#d9d9d9" stroke-width="1"/><path d="M255.5 594.88H647" stroke="#d9d9d9" stroke-width="1"/><path d="M255.5 620.50H647" stroke="#d9d9d9" stroke-width="1"/><path d="M255.5 415.5V620.5M647 415.5V620.5" stroke="#d9d9d9"/><rect x="255.50" y="441.12" width="37.95" height="179.88" fill="#5b9bd5"/><rect x="294.65" y="461.62" width="37.95" height="159.38" fill="#5b9bd5"/><rect x="333.80" y="492.38" width="37.95" height="128.62" fill="#5b9bd5"/><rect x="372.95" y="518.00" width="37.95" height="103.00" fill="#5b9bd5"/><rect x="412.10" y="518.00" width="37.95" height="103.00" fill="#5b9bd5"/><rect x="451.25" y="533.38" width="37.95" height="87.62" fill="#5b9bd5"/><rect x="490.40" y="543.62" width="37.95" height="77.38" fill="#5b9bd5"/><rect x="529.55" y="543.62" width="37.95" height="77.38" fill="#5b9bd5"/><rect x="568.70" y="548.75" width="37.95" height="72.25" fill="#5b9bd5"/><rect x="607.85" y="559.00" width="37.95" height="62.00" fill="#5b9bd5"/><path d="M255.5 441.12H647" stroke="#fff" stroke-opacity="0.12"/><path d="M255.5 466.75H647" stroke="#fff" stroke-opacity="0.12"/><path d="M255.5 492.38H647" stroke="#fff" stroke-opacity="0.12"/><path d="M255.5 518.00H647" stroke="#fff" stroke-opacity="0.12"/><path d="M255.5 543.62H647" stroke="#fff" stroke-opacity="0.12"/><path d="M255.5 569.25H647" stroke="#fff" stroke-opacity="0.12"/><path d="M255.5 594.88H647" stroke="#fff" stroke-opacity="0.12"/><polyline points="275.07,585.33 314.22,554.18 353.38,529.05 392.52,508.96 431.68,488.86 470.82,471.77 509.97,456.70 549.12,441.63 588.28,427.56 627.42,415.50" fill="none" stroke="#ed7d31" stroke-width="2.6" stroke-linejoin="round"/></svg>
<div style="position:absolute;left:200px;top:408.5px;width:48px;height:14px;line-height:14px;text-align:right;color:#595959;font-size:11px;">40</div>
<div style="position:absolute;left:200px;top:434.1px;width:48px;height:14px;line-height:14px;text-align:right;color:#595959;font-size:11px;">35</div>
<div style="position:absolute;left:200px;top:459.8px;width:48px;height:14px;line-height:14px;text-align:right;color:#595959;font-size:11px;">30</div>
<div style="position:absolute;left:200px;top:485.4px;width:48px;height:14px;line-height:14px;text-align:right;color:#595959;font-size:11px;">25</div>
<div style="position:absolute;left:200px;top:511.0px;width:48px;height:14px;line-height:14px;text-align:right;color:#595959;font-size:11px;">20</div>
<div style="position:absolute;left:200px;top:536.6px;width:48px;height:14px;line-height:14px;text-align:right;color:#595959;font-size:11px;">15</div>
<div style="position:absolute;left:200px;top:562.2px;width:48px;height:14px;line-height:14px;text-align:right;color:#595959;font-size:11px;">10</div>
<div style="position:absolute;left:200px;top:587.9px;width:48px;height:14px;line-height:14px;text-align:right;color:#595959;font-size:11px;">5</div>
<div style="position:absolute;left:200px;top:613.5px;width:48px;height:14px;line-height:14px;text-align:right;color:#595959;font-size:11px;">0</div>
<div style="position:absolute;left:656px;top:408.5px;white-space:nowrap;color:#595959;font-size:11px;line-height:14px;font-size:10.5px;">100%</div>
<div style="position:absolute;left:656px;top:429.0px;white-space:nowrap;color:#595959;font-size:11px;line-height:14px;font-size:10.5px;">90%</div>
<div style="position:absolute;left:656px;top:449.5px;white-space:nowrap;color:#595959;font-size:11px;line-height:14px;font-size:10.5px;">80%</div>
<div style="position:absolute;left:656px;top:470.0px;white-space:nowrap;color:#595959;font-size:11px;line-height:14px;font-size:10.5px;">70%</div>
<div style="position:absolute;left:656px;top:490.5px;white-space:nowrap;color:#595959;font-size:11px;line-height:14px;font-size:10.5px;">60%</div>
<div style="position:absolute;left:656px;top:511.0px;white-space:nowrap;color:#595959;font-size:11px;line-height:14px;font-size:10.5px;">50%</div>
<div style="position:absolute;left:656px;top:531.5px;white-space:nowrap;color:#595959;font-size:11px;line-height:14px;font-size:10.5px;">40%</div>
<div style="position:absolute;left:656px;top:552.0px;white-space:nowrap;color:#595959;font-size:11px;line-height:14px;font-size:10.5px;">30%</div>
<div style="position:absolute;left:656px;top:572.5px;white-space:nowrap;color:#595959;font-size:11px;line-height:14px;font-size:10.5px;">20%</div>
<div style="position:absolute;left:656px;top:593.0px;white-space:nowrap;color:#595959;font-size:11px;line-height:14px;font-size:10.5px;">10%</div>
<div style="position:absolute;left:656px;top:613.5px;white-space:nowrap;color:#595959;font-size:11px;line-height:14px;font-size:10.5px;">0%</div>
<div style="position:absolute;left:-24.92500000000001px;top:630.0px;width:600px;height:16px;line-height:16px;text-align:center;white-space:nowrap;color:#595959;font-size:11px;">4</div>
<div style="position:absolute;left:14.224999999999966px;top:630.0px;width:600px;height:16px;line-height:16px;text-align:center;white-space:nowrap;color:#595959;font-size:11px;">1</div>
<div style="position:absolute;left:53.375px;top:630.0px;width:600px;height:16px;line-height:16px;text-align:center;white-space:nowrap;color:#595959;font-size:11px;">5</div>
<div style="position:absolute;left:92.52499999999998px;top:630.0px;width:600px;height:16px;line-height:16px;text-align:center;white-space:nowrap;color:#595959;font-size:11px;">2</div>
<div style="position:absolute;left:131.675px;top:630.0px;width:600px;height:16px;line-height:16px;text-align:center;white-space:nowrap;color:#595959;font-size:11px;">7</div>
<div style="position:absolute;left:170.825px;top:630.0px;width:600px;height:16px;line-height:16px;text-align:center;white-space:nowrap;color:#595959;font-size:11px;">8</div>
<div style="position:absolute;left:209.97499999999997px;top:630.0px;width:600px;height:16px;line-height:16px;text-align:center;white-space:nowrap;color:#595959;font-size:11px;">3</div>
<div style="position:absolute;left:249.125px;top:630.0px;width:600px;height:16px;line-height:16px;text-align:center;white-space:nowrap;color:#595959;font-size:11px;">6</div>
<div style="position:absolute;left:288.2750000000001px;top:630.0px;width:600px;height:16px;line-height:16px;text-align:center;white-space:nowrap;color:#595959;font-size:11px;">9</div>
<div style="position:absolute;left:327.42499999999995px;top:630.0px;width:600px;height:16px;line-height:16px;text-align:center;white-space:nowrap;color:#595959;font-size:11px;">10</div>
<div style="position:absolute;left:159px;top:382.0px;width:600px;height:20px;line-height:20px;text-align:center;white-space:nowrap;color:#595959;font-size:17.3px;">Заголовок диаграммы</div>
<div style="position:absolute;left:868px;top:199px;width:22px;height:600px;background:#e6e6e6;"></div>
<div style="position:absolute;left:872px;top:201px;width:15px;height:15px;background:#fff;border:1px solid #ababab;"></div>
<div style="position:absolute;left:872px;top:216px;width:15px;height:546px;background:#fff;border:1px solid #ababab;border-top:2px solid #c8c8c8;"></div>
<div style="position:absolute;left:872px;top:762px;width:15px;height:22px;background:#dcdcdc;"></div>
<div style="position:absolute;left:872px;top:784px;width:15px;height:15px;background:#fff;border:1px solid #ababab;"></div>
<svg style="left:0;top:0" width="891" height="849"><path d="M876 209.5h7l-3.5-3.5z" fill="#666"/><path d="M876 790h7l-3.5 3.5z" fill="#666"/></svg>
<div style="position:absolute;left:1px;top:798px;width:889px;height:28px;background:#e6e6e6;border-top:1px solid #c6c6c6;"></div>
<div style="position:absolute;left:101px;top:799px;width:61px;height:24px;background:#fff;border-bottom:2px solid #217346;"></div>
<div style="position:absolute;left:-168.5px;top:803.0px;width:600px;height:16px;line-height:16px;text-align:center;white-space:nowrap;color:#217346;font-size:12px;font-weight:bold;">Лист1</div>
<div style="position:absolute;left:-109px;top:803.0px;width:600px;height:16px;line-height:16px;text-align:center;white-space:nowrap;color:#333;font-size:12px;">Лист3</div>
<div style="position:absolute;left:-49px;top:803.0px;width:600px;height:16px;line-height:16px;text-align:center;white-space:nowrap;color:#333;font-size:12px;">Лист2</div>
<svg style="left:0;top:0" width="891" height="849"><path d="M221.5 801v21M281.5 801v21" stroke="#9a9a9a"/><circle cx="322" cy="811.5" r="7" fill="none" stroke="#666" stroke-width="1.3"/><path d="M318 811.5h8M322 807.5v8" stroke="#666" stroke-width="1.3"/><path d="M535 805v1.5M535 810v1.5M535 815v1.5" stroke="#999" stroke-width="1.3"/></svg>
<div style="position:absolute;left:552px;top:805px;width:15px;height:15px;background:#fff;border:1px solid #ababab;"></div>
<div style="position:absolute;left:566px;top:805px;width:257px;height:15px;background:#fff;border:1px solid #ababab;"></div>
<div style="position:absolute;left:822px;top:806px;width:32px;height:13px;background:#dcdcdc;"></div>
<div style="position:absolute;left:854px;top:805px;width:15px;height:15px;background:#fff;border:1px solid #ababab;"></div>
<svg style="left:0;top:0" width="891" height="849"><path d="M562 809v7l-3.5-3.5z" fill="#666"/><path d="M859 809v7l3.5-3.5z" fill="#666"/></svg>
<div style="position:absolute;left:1px;top:826px;width:889px;height:22px;background:#f3f3f3;"></div>
<div style="position:absolute;left:8px;top:829px;white-space:nowrap;color:#444;font-size:11.5px;line-height:14px;">Готово</div>
<div style="position:absolute;left:286px;top:829px;white-space:nowrap;color:#444;font-size:11.5px;line-height:14px;">Среднее: 18,84</div>
<div style="position:absolute;left:415px;top:829px;white-space:nowrap;color:#444;font-size:11.5px;line-height:14px;">Количество: 67</div>
<div style="position:absolute;left:510px;top:829px;white-space:nowrap;color:#444;font-size:11.5px;line-height:14px;">Сумма: 942</div>
<div style="position:absolute;left:587px;top:826px;width:38px;height:22px;background:#c8c8c8;"></div>
<div style="position:absolute;left:845px;top:829px;white-space:nowrap;color:#444;font-size:11.5px;line-height:14px;">100%</div>
<svg style="left:0;top:0" width="891" height="849"><rect x="66.5" y="831.5" width="11" height="11" fill="#f3f3f3" stroke="#666"/><rect x="67" y="832" width="10.5" height="2" fill="#666"/><path d="M68.5 836.5h8M68.5 838.5h8M68.5 840.5h8" stroke="#777" stroke-dasharray="1.5 1"/><circle cx="68" cy="832.3" r="2.6" fill="#666" stroke="#f3f3f3" stroke-width="0.6"/><rect x="597.5" y="829.5" width="14" height="13" fill="none" stroke="#555"/><path d="M597.5 833.5h14M597.5 838h14M602 829.5v13M607 829.5v13" stroke="#555"/><rect x="637.5" y="829.5" width="14" height="13" fill="none" stroke="#555"/><rect x="640.5" y="832.5" width="8" height="7" fill="none" stroke="#555"/><path d="M642 834.5h5M642 836.5h5" stroke="#555"/><rect x="674.5" y="829.5" width="14" height="13" fill="none" stroke="#555"/><path d="M681.5 829.5v7h4v-7" fill="none" stroke="#555"/><path d="M674.5 836.5h14" stroke="#555"/><path d="M706 836.5h6" stroke="#444" stroke-width="1.5"/><path d="M716 836.5h100" stroke="#999"/><rect x="764" y="831" width="4" height="11" fill="#555"/><path d="M820 836.5h8M824 832.5v8" stroke="#444" stroke-width="1.5"/></svg>
<div style="position:absolute;left:0px;top:0px;width:1px;height:849px;background:#217346;"></div>
<div style="position:absolute;left:890px;top:0px;width:1px;height:849px;background:#217346;"></div>
<div style="position:absolute;left:0px;top:848px;width:891px;height:1px;background:#217346;"></div>
<div style="position:absolute;left:348px;top:110px;width:318px;height:184px;background:#fff;border:1px solid #c8c8c8;box-shadow:1px 2px 4px rgba(0,0,0,0.18);"></div>
<div style="position:absolute;left:349px;top:111px;width:316px;height:22px;background:#e6e6e6;"></div>
<div style="position:absolute;left:349px;top:189px;width:316px;height:22px;background:#e6e6e6;"></div>
<div style="position:absolute;left:359.5px;top:115px;white-space:nowrap;color:#444;font-size:11.5px;font-weight:bold;line-height:14px;">Гистограмма</div>
<div style="position:absolute;left:359.5px;top:193px;white-space:nowrap;color:#444;font-size:11.5px;font-weight:bold;line-height:14px;">Ящик с усами</div>
<div style="position:absolute;left:406px;top:133px;width:56px;height:53px;background:#c5c5c5;"></div>
<div style="position:absolute;left:350px;top:267px;width:314px;height:1px;background:#e1e1e1;"></div>
<div style="position:absolute;left:381.5px;top:274px;white-space:nowrap;color:#444;font-size:12px;line-height:14px;">Д<span style="text-decoration:underline">о</span>полнительные статистические диаграммы...</div>
<svg style="left:0;top:0" width="891" height="849"><rect x="358.5" y="155.5" width="7.0" height="23.5" fill="#d9d9d9" stroke="#777" stroke-width="1"/><rect x="365.5" y="150.5" width="6.5" height="28.5" fill="#d9d9d9" stroke="#777" stroke-width="1"/><rect x="372" y="145.5" width="6" height="33.5" fill="#d9d9d9" stroke="#777" stroke-width="1"/><rect x="378" y="153" width="6" height="26" fill="#d9d9d9" stroke="#777" stroke-width="1"/><rect x="384" y="165" width="6" height="14" fill="#d9d9d9" stroke="#777" stroke-width="1"/><rect x="390" y="170.5" width="5" height="8.5" fill="#d9d9d9" stroke="#777" stroke-width="1"/><path d="M358.5 143V179.5H395" fill="none" stroke="#777"/><rect x="415.5" y="144.5" width="6.0" height="34.0" fill="#d9d9d9" stroke="#777" stroke-width="1"/><rect x="421.5" y="149.5" width="6.5" height="29.0" fill="#d9d9d9" stroke="#777" stroke-width="1"/><rect x="428" y="154.5" width="6" height="24.0" fill="#d9d9d9" stroke="#777" stroke-width="1"/><rect x="434" y="159.5" width="6" height="19.0" fill="#d9d9d9" stroke="#777" stroke-width="1"/><rect x="440" y="164.5" width="6" height="14.0" fill="#d9d9d9" stroke="#777" stroke-width="1"/><rect x="446" y="169.5" width="5.5" height="9.0" fill="#d9d9d9" stroke="#777" stroke-width="1"/><path d="M413.5 142V178.5H454" fill="none" stroke="#777"/><path d="M416.5 177C420 163 426 152 436 149.5S448 147.8 452.5 148" fill="none" stroke="#777" stroke-width="1.6"/><path d="M358.5 224V257.5H398" fill="none" stroke="#777"/><rect x="365.5" y="237.5" width="5.0" height="7.0" fill="#fff" stroke="#777"/><path d="M368.5 229.5V237.5M368.5 244.5V247.5M366.5 229.5h4M366.5 247.5h4" stroke="#777"/><path d="M368.5 222V229.5" stroke="#777" stroke-dasharray="1 1.5"/><rect x="376.5" y="239.5" width="5.0" height="7.0" fill="#fff" stroke="#777"/><path d="M379.5 235.5V239.5M379.5 246.5V252.5M377.5 235.5h4M377.5 252.5h4" stroke="#777"/><path d="M379.5 228V235.5" stroke="#777" stroke-dasharray="1 1.5"/><path d="M379.5 252.5V255" stroke="#777" stroke-dasharray="1 1.5"/><rect x="387.5" y="234.5" width="5.0" height="7.0" fill="#fff" stroke="#777"/><path d="M390.5 227.5V234.5M390.5 241.5V247.5M388.5 227.5h4M388.5 247.5h4" stroke="#777"/><path d="M390.5 225V227.5" stroke="#777" stroke-dasharray="1 1.5"/><path d="M390.5 247.5V252" stroke="#777" stroke-dasharray="1 1.5"/><path d="M354.5 273V287.5H370" fill="none" stroke="#777"/><rect x="356.5" y="280" width="3.0" height="7.5" fill="#aaa" stroke="#777" stroke-width="0.8"/><rect x="359.5" y="275" width="3.0" height="12.5" fill="#aaa" stroke="#777" stroke-width="0.8"/><rect x="362.5" y="278" width="3.0" height="9.5" fill="#aaa" stroke="#777" stroke-width="0.8"/><rect x="365.5" y="283" width="3.0" height="4.5" fill="#aaa" stroke="#777" stroke-width="0.8"/></svg>
<div style="position:absolute;left:424px;top:186px;width:201px;height:158px;background:#fff;border:1px solid #bdbdbd;box-shadow:1px 1px 3px rgba(0,0,0,0.15);"></div>
<div style="position:absolute;left:436.5px;top:194px;white-space:nowrap;color:#444;font-size:11.5px;font-weight:bold;line-height:14px;">Парето</div>
<div style="position:absolute;left:436.5px;top:215.0px;white-space:nowrap;color:#444;font-size:12px;line-height:15px;">Этот тип диаграммы</div>
<div style="position:absolute;left:436.5px;top:230.05px;white-space:nowrap;color:#444;font-size:12px;line-height:15px;">используется:</div>
<div style="position:absolute;left:436.5px;top:245.1px;white-space:nowrap;color:#444;font-size:12px;line-height:15px;">• для отображения влияния</div>
<div style="position:absolute;left:436.5px;top:260.15px;white-space:nowrap;color:#444;font-size:12px;line-height:15px;">каждого фактора на итоговое</div>
<div style="position:absolute;left:436.5px;top:275.2px;white-space:nowrap;color:#444;font-size:12px;line-height:15px;">значение;</div>
<div style="position:absolute;left:436.5px;top:290.25px;white-space:nowrap;color:#444;font-size:12px;line-height:15px;">• для отображения наиболее</div>
<div style="position:absolute;left:436.5px;top:305.3px;white-space:nowrap;color:#444;font-size:12px;line-height:15px;">существенных факторов в</div>
<div style="position:absolute;left:436.5px;top:320.35px;white-space:nowrap;color:#444;font-size:12px;line-height:15px;">данных.</div>
<svg style="left:0;top:0" width="891" height="849"><defs><filter id="sh" x="-30%" y="-30%" width="160%" height="160%"><feGaussianBlur in="SourceAlpha" stdDeviation="2"/><feOffset dx="1" dy="2"/><feComponentTransfer><feFuncA type="linear" slope="0.45"/></feComponentTransfer><feMerge><feMergeNode/><feMergeNode in="SourceGraphic"/></feMerge></filter><filter id="sh2" x="-40%" y="-40%" width="180%" height="180%"><feGaussianBlur in="SourceAlpha" stdDeviation="3.5"/><feOffset dx="2" dy="3.5"/><feComponentTransfer><feFuncA type="linear" slope="0.55"/></feComponentTransfer><feMerge><feMergeNode/><feMergeNode in="SourceGraphic"/></feMerge></filter></defs><polygon points="223.5,133.4 322.0,102.2 318.3,93.2 349.6,96.9 329.2,119.5 325.9,111.5 226.5,143.0" fill="#f83f40" filter="url(#sh)"/><polygon points="259.4,308.1 402.3,188.2 407.9,194.9 420.6,165.8 389.8,173.3 395.4,179.9 252.4,299.9" fill="#f83f40" filter="url(#sh)"/><circle cx="202.5" cy="145" r="36" fill="#0cab8c" filter="url(#sh2)"/><circle cx="251.5" cy="298.5" r="36" fill="#0cab8c" filter="url(#sh2)"/></svg>
<svg style="left:0;top:0" width="891" height="849"><path d="M203.8 126H208V163H202.3V134.3Q198 137.5 193.5 139.8V135.2Q199.5 132 203.8 126Z" fill="#fff"/><path d="M241.7 291C241.7 285.5 245.5 282.5 251 282.5C256.8 282.5 260.6 286.3 260.6 291C260.6 294.5 258.8 297.2 256 300L242.8 314.6H263.4" fill="none" stroke="#fff" stroke-width="4.8" stroke-linejoin="miter"/></svg>
<svg style="left:0;top:0" width="891" height="849"><g opacity="0.85"><rect x="23" y="771" width="64" height="51" rx="7" fill="#fff" fill-opacity="0.25" stroke="#c8c8c8" stroke-width="1"/><rect x="27.5" y="775.5" width="56" height="42" rx="5" fill="none" stroke="#bdbdbd" stroke-width="3"/><path d="M33 781L55 803" stroke="#b8b8b8" stroke-width="3" stroke-linecap="round"/><path d="M31 779.5l12 3.5-8.5 8.5z" fill="#b8b8b8"/><path d="M33 812l3-3v6zM58 809l3 3-3 3z" fill="#d0d0d0"/><path d="M43.5 828v-5a2 2 0 0 1 2-2h16a2 2 0 0 1 2 2v5" fill="none" stroke="#c8c8c8"/></g><text x="95" y="806.5" font-family="Liberation Sans" font-weight="bold" font-size="29" fill="#f7a3b4" fill-opacity="0.8" stroke="#fcd3dc" stroke-width="1.5" textLength="55" lengthAdjust="spacingAndGlyphs">OS</text><text x="160.5" y="804.5" font-family="Liberation Sans" font-weight="bold" font-size="28" fill="#fff" fill-opacity="0.5" stroke="#a8a8a8" stroke-opacity="0.85" stroke-width="1.4" textLength="123" lengthAdjust="spacingAndGlyphs">Helper</text></svg>
</body></html>
